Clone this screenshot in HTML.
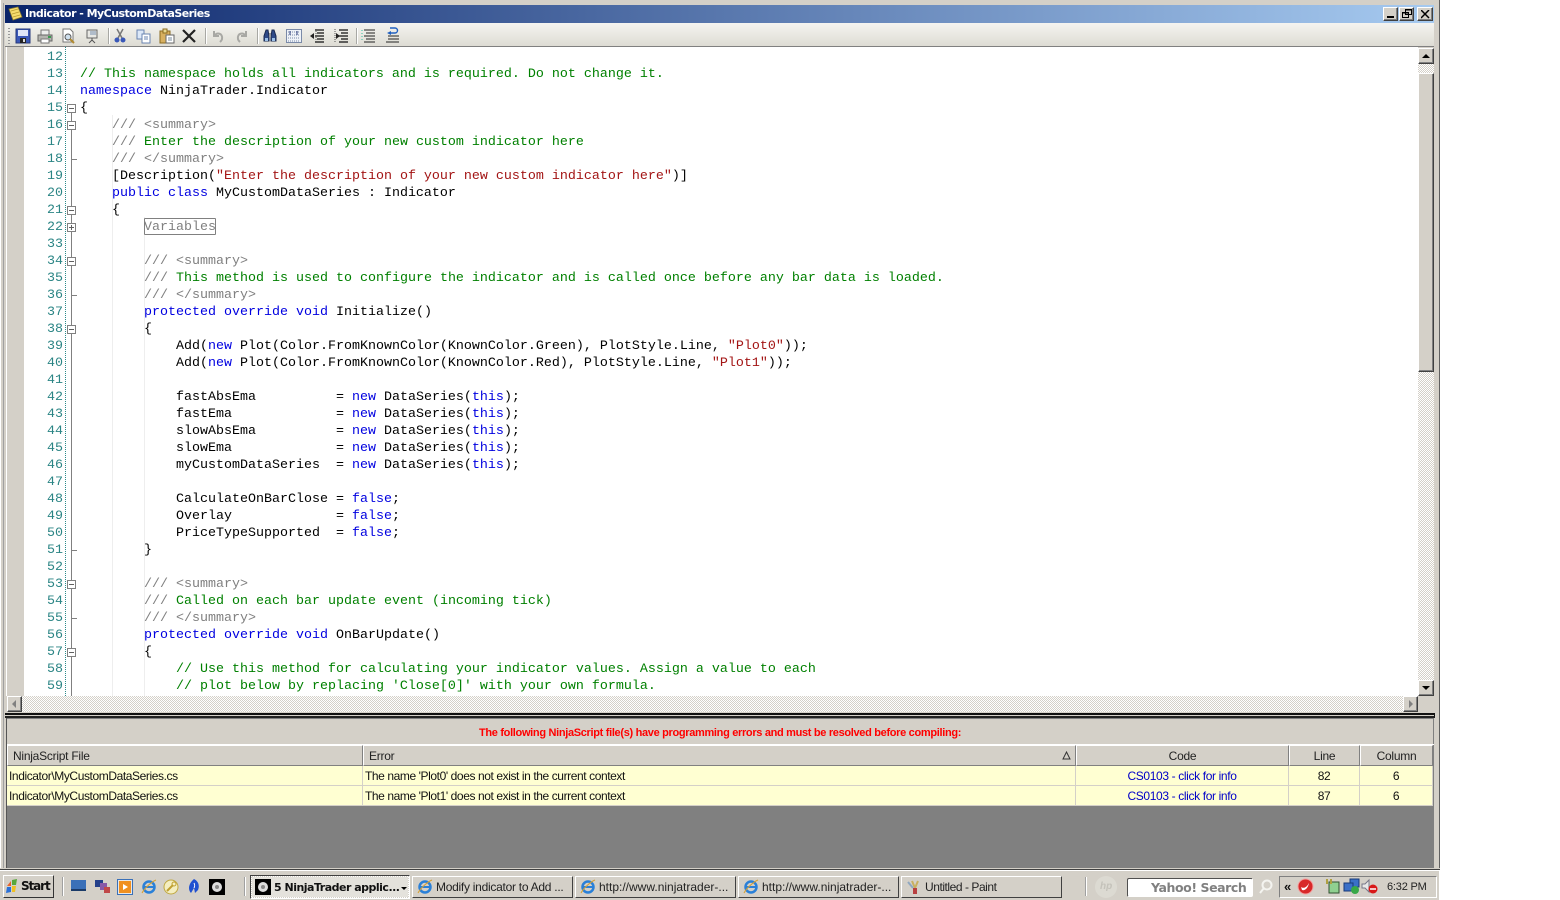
<!DOCTYPE html>
<html><head><meta charset="utf-8"><style>
html,body{margin:0;padding:0;background:#fff}
body{width:1560px;height:900px;overflow:hidden;position:relative;font-family:"Liberation Sans",sans-serif}
.a,svg.i{position:absolute}
pre{margin:0;font:13.33px/17px "Liberation Mono",monospace;position:absolute}
.k{color:#0000e0}.c{color:#008000}.g{color:#808080}.s{color:#a31515}.t{color:#000}
.btn{position:absolute;background:#d4d0c8;box-sizing:border-box;border:1px solid;border-color:#fff #404040 #404040 #fff;box-shadow:inset -1px -1px 0 #808080}
.dith{position:absolute;background:repeating-conic-gradient(#d4d0c8 0 25%,#fff 0 50%) 0 0/2px 2px}
.hd{position:absolute;top:745px;height:21px;background:#d4d0c8;box-sizing:border-box;border-right:1px solid #808080;border-left:1px solid #fff;border-bottom:1px solid #808080;border-top:1px solid #fff;font-size:12px;line-height:20px;color:#222;letter-spacing:-.25px}
.ro{position:absolute;height:20px;background:#ffffd2;box-sizing:border-box;border-right:1px solid #d4d0c8;border-bottom:1px solid #d4d0c8;font-size:12px;line-height:20px;color:#111;letter-spacing:-.41px;white-space:nowrap;overflow:hidden}
.sep{position:absolute;top:28px;width:1px;height:16px;background:#a8a8a4;border-right:1px solid #fff}
.box{position:absolute;left:67px;width:9px;height:9px;box-sizing:border-box;border:1px solid #808080;background:#fff}
.box:before{content:"";position:absolute;left:1px;top:3px;width:5px;height:1px;background:#606060}
.box.p:after{content:"";position:absolute;left:3px;top:1px;width:1px;height:5px;background:#606060}
.tick{position:absolute;left:71px;width:6px;height:1px;background:#808080}
.tb{position:absolute;top:876px;height:22px;box-sizing:border-box;background:#d4d0c8;border:1px solid;border-color:#fff #404040 #404040 #fff;font-size:12px;line-height:20px;color:#222;white-space:nowrap;overflow:hidden}
.sp{position:absolute;top:877px;width:1px;height:19px;background:#a0a0a0;border-right:1px solid #fff}
</style></head><body>

<!-- window frame -->
<div class="a" style="left:0;top:0;width:1439px;height:870px;background:#d4d0c8;border-right:1px solid #606060;box-sizing:content-box"></div>
<div class="a" style="left:0;top:0;width:1px;height:870px;background:#fff"></div>
<div class="a" style="left:3px;top:3px;width:1px;height:866px;background:#a0a0a0"></div>

<!-- title bar -->
<div class="a" style="left:5px;top:5px;width:1429px;height:18px;background:linear-gradient(90deg,#0a246a,#a6caf0)"></div>
<svg class="i" style="left:7px;top:6px" width="16" height="16" viewBox="0 0 16 16"><path d="M2 3 L11 1 L15 11 L6 14 Z" fill="#f5dc6e" stroke="#8a7a30" stroke-width=".8"/><path d="M4 5l7-2M5 8l7-2M6 11l7-2" stroke="#b89a30" stroke-width=".8"/></svg>
<div class="a" style="left:25px;top:7px;font:bold 11px/14px 'DejaVu Sans',sans-serif;color:#fff;letter-spacing:-.53px;white-space:nowrap">Indicator - MyCustomDataSeries</div>
<div class="btn" style="left:1383px;top:7px;width:15px;height:14px"><div class="a" style="left:3px;top:8px;width:7px;height:2px;background:#000"></div></div>
<div class="btn" style="left:1399px;top:7px;width:15px;height:14px"><svg class="i" style="left:2px;top:1px" width="10" height="10"><path d="M3.5 .5h6v5h-6zM.5 3.5h6v5h-6z" fill="none" stroke="#000"/><path d="M3 1h7M0 4h7" stroke="#000"/></svg></div>
<div class="btn" style="left:1417px;top:7px;width:16px;height:14px"><svg class="i" style="left:3px;top:2px" width="9" height="9"><path d="M0 0l8 8M8 0l-8 8" stroke="#000" stroke-width="1.5"/></svg></div>

<!-- toolbar -->
<div class="a" style="left:5px;top:23px;width:1429px;height:24px;background:linear-gradient(#f5f4f0,#dedcd4);border-bottom:1px solid #808080;box-sizing:border-box"></div>
<div class="a" style="left:8px;top:28px;width:2px;height:16px;background:repeating-linear-gradient(#999 0 1px,transparent 1px 3px)"></div>

<svg class="i" style="left:15px;top:28px" width="16" height="16"><rect x="1" y="1" width="14" height="14" fill="#3a58b8" stroke="#26387a"/><rect x="3" y="2" width="10" height="6" fill="#dfe6f8"/><rect x="5" y="10" width="6" height="5" fill="#222"/><rect x="8" y="11" width="2" height="3" fill="#ddd"/></svg>
<svg class="i" style="left:37px;top:28px" width="16" height="16"><path d="M4 2h8v5H4z" fill="#eee" stroke="#777"/><path d="M1 7h14v6H1z" fill="#b4b4b0" stroke="#666"/><path d="M4 11h8v4H4z" fill="#fff" stroke="#777"/><rect x="11" y="8" width="3" height="2" fill="#3a9a50"/></svg>
<svg class="i" style="left:60px;top:28px" width="16" height="16"><path d="M3 1h7l3 3v10H3z" fill="#fff" stroke="#777"/><circle cx="8" cy="9" r="3" fill="#cfe0ee" stroke="#555"/><path d="M10 11l4 4" stroke="#b08a30" stroke-width="2"/></svg>
<svg class="i" style="left:84px;top:28px" width="16" height="16"><path d="M3 2h10v8H3z" fill="#e8e8e4" stroke="#666"/><path d="M8 10v3M5 15l3-3 3 3" stroke="#555" fill="none"/><path d="M6 4h6M6 6h6" stroke="#7890b0"/></svg>
<div class="sep" style="left:108px"></div>
<svg class="i" style="left:113px;top:28px" width="14" height="16"><path d="M4 1l5 9M10 1L5 10" stroke="#777" stroke-width="1.5"/><circle cx="4" cy="12" r="2.5" fill="#3a58b8"/><circle cx="10" cy="12" r="2.5" fill="#3a58b8"/></svg>
<svg class="i" style="left:136px;top:29px" width="16" height="15"><path d="M1 1h7v9H1z" fill="#dce8f8" stroke="#6a84b0"/><path d="M6 5h8v9H6z" fill="#fff" stroke="#6a84b0"/><path d="M8 8h4M8 10h4" stroke="#6a84b0"/></svg>
<svg class="i" style="left:159px;top:28px" width="16" height="16"><path d="M1 3h10v12H1z" fill="#d8b060" stroke="#8a6a20"/><path d="M4 1h4v4H4z" fill="#e8d890" stroke="#8a6a20"/><path d="M7 7h8v8H7z" fill="#fff" stroke="#666"/><path d="M9 10h4M9 12h4" stroke="#789"/></svg>
<svg class="i" style="left:182px;top:29px" width="14" height="14"><path d="M1 1l12 12M13 1L1 13" stroke="#222" stroke-width="2.2"/></svg>
<div class="sep" style="left:205px"></div>
<svg class="i" style="left:211px;top:29px" width="14" height="14"><path d="M3 2v5h5M3 7c3-4 9-3 8 3 0 1-1 2-2 3" fill="none" stroke="#a8a8a4" stroke-width="2"/></svg>
<svg class="i" style="left:235px;top:29px" width="14" height="14"><path d="M11 2v5H6M11 7C8 3 2 4 3 10c0 1 1 2 2 3" fill="none" stroke="#a8a8a4" stroke-width="2"/></svg>
<div class="sep" style="left:257px"></div>
<svg class="i" style="left:262px;top:28px" width="16" height="16"><path d="M2 8l2-6h2l1 6v5H2zM14 8l-2-6h-2L9 8v5h5z" fill="#2f4a88" stroke="#1a2a50"/><rect x="7" y="5" width="2" height="4" fill="#999"/><rect x="3" y="10" width="3" height="3" fill="#9cc0e8"/><rect x="10" y="10" width="3" height="3" fill="#9cc0e8"/></svg>
<svg class="i" style="left:286px;top:29px" width="16" height="14"><rect x=".5" y=".5" width="15" height="13" fill="#eef2f8" stroke="#7a8aa8"/><path d="M2 3h12M2 6h12M2 9h12M2 12h12" stroke="#7a8aa8" stroke-dasharray="1 1"/><path d="M4 2v4M11 2v4" stroke="#26387a"/></svg>
<svg class="i" style="left:309px;top:28px" width="16" height="16"><path d="M6 2h9M8 5h7M6 8h9M8 11h7M6 14h9" stroke="#111" stroke-width="1.2"/><path d="M1 8l4-3v6z" fill="#222"/><path d="M7 1v14" stroke="#555" stroke-dasharray="1 1"/></svg>
<svg class="i" style="left:333px;top:28px" width="16" height="16"><path d="M6 2h9M8 5h7M6 8h9M8 11h7M6 14h9" stroke="#111" stroke-width="1.2"/><path d="M7 8l-4-3v6z" fill="#222"/><path d="M2 1v14" stroke="#555" stroke-dasharray="1 1"/></svg>
<div class="sep" style="left:356px"></div>
<svg class="i" style="left:361px;top:28px" width="15" height="16"><path d="M3 2h11M5 5h9M3 8h11M5 11h9M3 14h11" stroke="#222"/><path d="M1 2v12" stroke="#30c0a0" stroke-dasharray="1 2"/></svg>
<svg class="i" style="left:385px;top:27px" width="15" height="17"><path d="M3 9h11M3 12h11M1 15h13" stroke="#222"/><path d="M5 1h5a2 2 0 0 1 0 5H5" fill="none" stroke="#2060c0" stroke-width="1.4"/><path d="M2 6l4-2v4z" fill="#2060c0"/></svg>

<!-- editor -->
<div class="a" style="left:6px;top:47px;width:1412px;height:649px;background:#fff;overflow:hidden">
 <div class="a" style="left:1px;top:0;width:17px;height:649px;background:#d4d0c8"></div>
 <div class="a" style="left:59px;top:0;width:0;height:649px;border-left:1px dotted #2b8a8a"></div>
 <div class="a" style="left:106px;top:68px;width:1px;height:581px;background:#eeeeee"></div>
 <div class="a" style="left:138px;top:170px;width:1px;height:479px;background:#eeeeee"></div>
 <div class="a" style="left:65px;top:65px;width:1px;height:584px;background:#808080"></div>
 <pre style="left:0;top:2px;width:57px;text-align:right;color:#2b8585">12
13
14
15
16
17
18
19
20
21
22
33
34
35
36
37
38
39
40
41
42
43
44
45
46
47
48
49
50
51
52
53
54
55
56
57
58
59</pre>
 <pre style="left:74px;top:2px;color:#000"> 
<span class="c">// This namespace holds all indicators and is required. Do not change it.</span>
<span class="k">namespace</span> NinjaTrader.Indicator
{
    <span class="g">/// &lt;summary&gt;</span>
    <span class="g">///</span> <span class="c">Enter the description of your new custom indicator here</span>
    <span class="g">/// &lt;/summary&gt;</span>
    [Description(<span class="s">"Enter the description of your new custom indicator here"</span>)]
    <span class="k">public class</span> MyCustomDataSeries : Indicator
    {
        <span class="g">Variables</span>

        <span class="g">/// &lt;summary&gt;</span>
        <span class="g">///</span> <span class="c">This method is used to configure the indicator and is called once before any bar data is loaded.</span>
        <span class="g">/// &lt;/summary&gt;</span>
        <span class="k">protected override void</span> Initialize()
        {
            Add(<span class="k">new</span> Plot(Color.FromKnownColor(KnownColor.Green), PlotStyle.Line, <span class="s">"Plot0"</span>));
            Add(<span class="k">new</span> Plot(Color.FromKnownColor(KnownColor.Red), PlotStyle.Line, <span class="s">"Plot1"</span>));

            fastAbsEma          = <span class="k">new</span> DataSeries(<span class="k">this</span>);
            fastEma             = <span class="k">new</span> DataSeries(<span class="k">this</span>);
            slowAbsEma          = <span class="k">new</span> DataSeries(<span class="k">this</span>);
            slowEma             = <span class="k">new</span> DataSeries(<span class="k">this</span>);
            myCustomDataSeries  = <span class="k">new</span> DataSeries(<span class="k">this</span>);

            CalculateOnBarClose = <span class="k">false</span>;
            Overlay             = <span class="k">false</span>;
            PriceTypeSupported  = <span class="k">false</span>;
        }

        <span class="g">/// &lt;summary&gt;</span>
        <span class="g">///</span> <span class="c">Called on each bar update event (incoming tick)</span>
        <span class="g">/// &lt;/summary&gt;</span>
        <span class="k">protected override void</span> OnBarUpdate()
        {
            <span class="c">// Use this method for calculating your indicator values. Assign a value to each</span>
            <span class="c">// plot below by replacing 'Close[0]' with your own formula.</span></pre>
 <div class="a" style="left:138px;top:171px;width:70px;height:15px;border:1px solid #808080;border-radius:1px"></div>
</div>

<!-- folding markers (page coordinates) -->
<div class="box" style="top:104px"></div>
<div class="box" style="top:121px"></div>
<div class="tick" style="top:159px"></div>
<div class="box" style="top:206px"></div>
<div class="box p" style="top:223px"></div>
<div class="box" style="top:257px"></div>
<div class="tick" style="top:295px"></div>
<div class="box" style="top:325px"></div>
<div class="tick" style="top:550px"></div>
<div class="box" style="top:580px"></div>
<div class="tick" style="top:618px"></div>
<div class="box" style="top:648px"></div>

<!-- vertical scrollbar -->
<div class="dith" style="left:1418px;top:48px;width:16px;height:648px"></div>
<div class="btn" style="left:1418px;top:48px;width:16px;height:16px"><div class="a" style="left:3px;top:5px;width:0;height:0;border:4px solid transparent;border-top:0;border-bottom:4px solid #000"></div></div>
<div class="btn" style="left:1418px;top:73px;width:16px;height:299px"></div>
<div class="btn" style="left:1418px;top:680px;width:16px;height:16px"><div class="a" style="left:3px;top:5px;width:0;height:0;border:4px solid transparent;border-bottom:0;border-top:4px solid #000"></div></div>

<!-- horizontal scrollbar -->
<div class="dith" style="left:7px;top:696px;width:1411px;height:16px"></div>
<div class="btn" style="left:7px;top:696px;width:15px;height:16px"><div class="a" style="left:4px;top:3px;width:0;height:0;border:4px solid transparent;border-left:0;border-right:4px solid #808080"></div></div>
<div class="btn" style="left:1403px;top:696px;width:15px;height:16px"><div class="a" style="left:5px;top:3px;width:0;height:0;border:4px solid transparent;border-right:0;border-left:4px solid #808080"></div></div>
<div class="a" style="left:1418px;top:696px;width:16px;height:16px;background:#d4d0c8"></div>

<!-- splitter -->
<div class="a" style="left:5px;top:713px;width:1430px;height:5px;box-sizing:border-box;background:#d4d0c8;border-top:2px solid #111;border-bottom:2px solid #222;border-right:1px solid #111"></div>

<!-- error panel -->
<div class="a" style="left:6px;top:718px;width:1428px;height:150px;background:#808080;border-left:1px solid #555;box-sizing:border-box"></div>
<div class="a" style="left:7px;top:719px;width:1426px;height:25px;background:#d4d0c8"></div>
<div class="a" style="left:7px;top:744px;width:1427px;height:1px;background:#fff"></div>
<div class="a" style="left:479px;top:726px;font:bold 11px/14px 'Liberation Sans',sans-serif;color:#f00;white-space:nowrap;letter-spacing:-.32px">The following NinjaScript file(s) have programming errors and must be resolved before compiling:</div>

<div class="hd" style="left:7px;width:356px;padding-left:5px">NinjaScript File</div>
<div class="hd" style="left:363px;width:713px;padding-left:5px">Error<svg class="i" style="left:698px;top:5px" width="9" height="9"><path d="M4.500 1L8 8H1z" fill="none" stroke="#333"/></svg></div>
<div class="hd" style="left:1076px;width:213px;text-align:center">Code</div>
<div class="hd" style="left:1289px;width:71px;text-align:center">Line</div>
<div class="hd" style="left:1360px;width:73px;text-align:center">Column</div>

<div class="ro" style="left:7px;top:766px;width:356px;padding-left:2px">Indicator\MyCustomDataSeries.cs</div>
<div class="ro" style="left:363px;top:766px;width:713px;padding-left:2px">The name 'Plot0' does not exist in the current context</div>
<div class="ro" style="left:1076px;top:766px;width:213px;text-align:center;color:#0000c8;letter-spacing:-.36px">CS0103 - click for info</div>
<div class="ro" style="left:1289px;top:766px;width:71px;text-align:center">82</div>
<div class="ro" style="left:1360px;top:766px;width:73px;text-align:center">6</div>
<div class="ro" style="left:7px;top:786px;width:356px;padding-left:2px">Indicator\MyCustomDataSeries.cs</div>
<div class="ro" style="left:363px;top:786px;width:713px;padding-left:2px">The name 'Plot1' does not exist in the current context</div>
<div class="ro" style="left:1076px;top:786px;width:213px;text-align:center;color:#0000c8;letter-spacing:-.36px">CS0103 - click for info</div>
<div class="ro" style="left:1289px;top:786px;width:71px;text-align:center">87</div>
<div class="ro" style="left:1360px;top:786px;width:73px;text-align:center">6</div>

<!-- window bottom edge -->
<div class="a" style="left:0;top:868px;width:1440px;height:1px;background:#d4d0c8"></div>
<div class="a" style="left:0;top:869px;width:1440px;height:1px;background:#404040"></div>

<!-- taskbar -->
<div class="a" style="left:0;top:870px;width:1440px;height:30px;background:#d4d0c8;border-top:1px solid #fff;box-sizing:border-box"></div>
<div class="a" style="left:1439px;top:870px;width:1px;height:30px;background:#fff"></div>

<div class="tb" style="left:3px;top:875px;width:51px;height:23px;border-color:#fff #333 #333 #fff"></div>
<svg class="i" style="left:5px;top:878px" width="16" height="16"><path d="M2 8l4-5v5z" fill="#e8642a"/><path d="M7 2l5-1-1 6H7z" fill="#58a83a"/><path d="M2 9h4v5l-5 1z" fill="#2a70d8"/><path d="M7 8h4l-1 6H7z" fill="#f0c020"/></svg>
<div class="a" style="left:21px;top:879px;font:bold 12px/15px 'DejaVu Sans',sans-serif;color:#111;letter-spacing:-1.1px">Start</div>

<div class="sp" style="left:62px"></div>
<svg class="i" style="left:71px;top:879px" width="16" height="14"><rect x="0" y="1" width="15" height="11" fill="#3a70b8"/><rect x="0" y="10" width="15" height="2" fill="#1a3a68"/></svg>
<svg class="i" style="left:95px;top:879px" width="16" height="15"><rect x="0" y="1" width="8" height="7" fill="#24408a"/><rect x="5" y="4" width="7" height="7" fill="#8858a8"/><rect x="9" y="8" width="6" height="6" fill="#c04848"/></svg>
<svg class="i" style="left:117px;top:879px" width="16" height="16"><rect x=".5" y=".5" width="15" height="15" fill="#e8e8e8" stroke="#3a70b8"/><rect x="2" y="2" width="12" height="12" fill="#f09020"/><path d="M6 5l5 3-5 3z" fill="#fff"/></svg>
<svg class="i" style="left:141px;top:879px" width="16" height="16"><circle cx="8" cy="8" r="5.500" fill="none" stroke="#2a80d8" stroke-width="2.500"/><path d="M3 8h10" stroke="#2a80d8" stroke-width="2"/><path d="M1 14C3 10 10 3 15 1" stroke="#d8a030" fill="none"/></svg>
<svg class="i" style="left:163px;top:879px" width="16" height="16"><circle cx="8" cy="8" r="7" fill="#f4eec0" stroke="#c0a840"/><path d="M4 12l6-6" stroke="#c0a030" stroke-width="2"/><circle cx="11" cy="5" r="2" fill="none" stroke="#c0a030"/></svg>
<svg class="i" style="left:186px;top:878px" width="15" height="17"><path d="M8 1c4 2 6 6 4 11l-3 3-1-5-3 5c-3-3-3-9 3-14z" fill="#2050d0"/><path d="M8 5c1 2 1 3 0 5" stroke="#fff" fill="none"/></svg>
<svg class="i" style="left:209px;top:879px" width="16" height="16"><rect width="16" height="16" fill="#000"/><circle cx="8" cy="8" r="5" fill="#ddd"/><circle cx="8" cy="8" r="2" fill="#888"/></svg>
<div class="sp" style="left:244px"></div>

<div class="a" style="left:250px;top:875px;width:160px;height:24px;box-sizing:border-box;border:1px solid;border-color:#404040 #fff #fff #404040;background:repeating-conic-gradient(#d4d0c8 0 25%,#fff 0 50%) 0 0/2px 2px"></div>
<div class="a" style="left:252px;top:877px;width:156px;height:20px;background:#e4e2dc"></div>
<svg class="i" style="left:255px;top:879px" width="16" height="16"><rect width="16" height="16" fill="#000"/><circle cx="8" cy="8" r="5" fill="#ddd"/><circle cx="8" cy="8" r="2" fill="#888"/></svg>
<div class="a" style="left:274px;top:881px;font:bold 11px/14px 'DejaVu Sans',sans-serif;color:#111;white-space:nowrap;letter-spacing:-.5px">5 NinjaTrader applic...</div>
<div class="a" style="left:401px;top:887px;width:0;height:0;border:3px solid transparent;border-bottom:0;border-top:3px solid #000"></div>

<div class="tb" style="left:412px;width:161px;padding-left:23px;letter-spacing:-.27px">Modify indicator to Add ...</div>
<div class="tb" style="left:575px;width:161px;padding-left:23px;">http://www.ninjatrader-...</div>
<div class="tb" style="left:738px;width:161px;padding-left:23px;">http://www.ninjatrader-...</div>
<div class="tb" style="left:901px;width:161px;padding-left:23px;letter-spacing:-.45px">Untitled - Paint</div>
<svg class="i" style="left:417px;top:879px" width="16" height="16"><circle cx="8" cy="8" r="5.500" fill="none" stroke="#2a80d8" stroke-width="2.500"/><path d="M3 8h10" stroke="#2a80d8" stroke-width="2"/><path d="M1 14C3 10 10 3 15 1" stroke="#d8a030" fill="none"/></svg>
<svg class="i" style="left:580px;top:879px" width="16" height="16"><circle cx="8" cy="8" r="5.500" fill="none" stroke="#2a80d8" stroke-width="2.500"/><path d="M3 8h10" stroke="#2a80d8" stroke-width="2"/><path d="M1 14C3 10 10 3 15 1" stroke="#d8a030" fill="none"/></svg>
<svg class="i" style="left:743px;top:879px" width="16" height="16"><circle cx="8" cy="8" r="5.500" fill="none" stroke="#2a80d8" stroke-width="2.500"/><path d="M3 8h10" stroke="#2a80d8" stroke-width="2"/><path d="M1 14C3 10 10 3 15 1" stroke="#d8a030" fill="none"/></svg>
<svg class="i" style="left:906px;top:879px" width="16" height="16"><path d="M6 2l3 7 3-7" fill="none" stroke="#c8b060" stroke-width="2"/><rect x="7" y="9" width="4" height="6" fill="#b84040"/><path d="M2 3l5 6" stroke="#90a8c0" stroke-width="2"/></svg>

<div class="sp" style="left:1085px"></div>
<div class="a" style="left:1095px;top:876px;width:22px;height:22px;border-radius:11px;background:#dcdad2"></div>
<div class="a" style="left:1100px;top:881px;font:italic bold 10px/12px 'Liberation Sans',sans-serif;color:#c4c2ba">hp</div>
<div class="a" style="left:1127px;top:878px;width:126px;height:19px;box-sizing:border-box;background:#fff;border:1px solid;border-color:#505050 #fff #fff #505050;border-radius:2px"></div>
<div class="a" style="left:1151px;top:880px;font:bold 12.5px/15px 'DejaVu Sans',sans-serif;color:#808080;white-space:nowrap;letter-spacing:-.42px">Yahoo! Search</div>
<svg class="i" style="left:1258px;top:878px" width="16" height="20"><circle cx="9" cy="7" r="4.500" fill="none" stroke="#f4f4f0" stroke-width="2"/><path d="M6 10l-4 5" stroke="#f4f4f0" stroke-width="2"/></svg>

<div class="a" style="left:1279px;top:876px;width:158px;height:22px;box-sizing:border-box;border:1px solid;border-color:#808080 #fff #fff #808080"></div>
<div class="a" style="left:1284px;top:879px;font:bold 13px/15px 'Liberation Sans',sans-serif;color:#111">«</div>
<svg class="i" style="left:1297px;top:878px" width="17" height="17"><circle cx="8.500" cy="8.500" r="7.500" fill="#d82828" stroke="#f4a0a0"/><path d="M4 9c3 2 6 0 8-4-1 5-4 8-7 7" fill="#fff"/></svg>
<svg class="i" style="left:1325px;top:878px" width="16" height="16"><rect x="4" y="4" width="10" height="11" fill="#90d090" stroke="#305030"/><path d="M2 1v5M6 1v5" stroke="#b0a040" stroke-width="2"/></svg>
<svg class="i" style="left:1343px;top:878px" width="17" height="17"><rect x="7" y="1" width="9" height="8" fill="#3a70c8" stroke="#183a78"/><rect x="1" y="5" width="9" height="8" fill="#3a70c8" stroke="#183a78"/><circle cx="12" cy="12" r="4" fill="#38a848"/></svg>
<svg class="i" style="left:1361px;top:878px" width="18" height="17"><path d="M1 6h3l4-4v12l-4-4H1z" fill="#e8e8e8" stroke="#778"/><circle cx="12" cy="11" r="4.500" fill="#d81818"/><path d="M9 11h6" stroke="#fff" stroke-width="1.500"/></svg>
<div class="a" style="left:1387px;top:880px;font:11px/14px 'Liberation Sans',sans-serif;color:#222;white-space:nowrap;letter-spacing:-.2px">6:32 PM</div>

</body></html>
